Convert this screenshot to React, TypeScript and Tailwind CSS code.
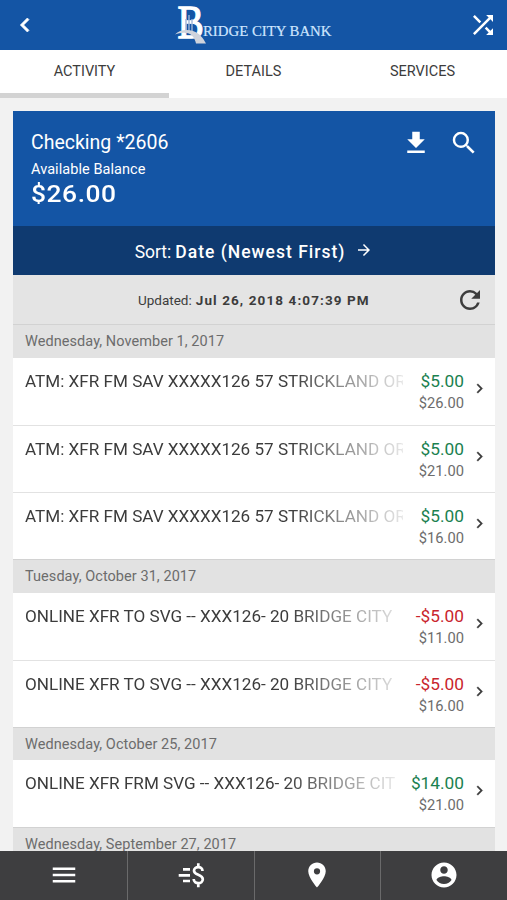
import { useState } from 'react';

type IconProps = {
  d: string;
  className: string;
};

const icons = {
  back: 'M15.41 7.41L14 6l-6 6 6 6 1.41-1.41L10.83 12z',
  next: 'M10 6L8.59 7.41 13.17 12l-4.58 4.59L10 18l6-6z',
  shuffle:
    'M10.59 9.17L5.41 4 4 5.41l5.17 5.17 1.42-1.41zM14.5 4l2.04 2.04L4 18.59 5.41 20 17.96 7.46 20 9.5V4h-5.5zm.33 9.41l-1.41 1.41 3.13 3.13L14.5 20H20v-5.5l-2.04 2.04-3.13-3.13z',
  download: 'M19 9h-4V3H9v6H5l7 7 7-7zM5 18v2h14v-2H5z',
  search:
    'M15.5 14h-.79l-.28-.27A6.471 6.471 0 0 0 16 9.5 6.5 6.5 0 1 0 9.5 16c1.61 0 3.09-.59 4.23-1.57l.27.28v.79l5 4.99L20.49 19l-4.99-5zm-6 0C7.01 14 5 11.99 5 9.5S7.01 5 9.5 5 14 7.01 14 9.5 11.99 14 9.5 14z',
  arrow: 'M12 4l-1.41 1.41L16.17 11H4v2h12.17l-5.58 5.59L12 20l8-8z',
  refresh:
    'M17.65 6.35A7.958 7.958 0 0 0 12 4c-4.42 0-7.99 3.58-7.99 8s3.57 8 7.99 8c3.73 0 6.84-2.55 7.73-6h-2.08A5.99 5.99 0 0 1 12 18c-3.31 0-6-2.69-6-6s2.69-6 6-6c1.66 0 3.14.69 4.22 1.78L13 11h7V4l-2.35 2.35z',
  menu: 'M3 18h18v-2H3v2zm0-5h18v-2H3v2zm0-7v2h18V6H3z',
  place:
    'M12 2C8.13 2 5 5.13 5 9c0 5.25 7 13 7 13s7-7.75 7-13c0-3.87-3.13-7-7-7zm0 9.5a2.5 2.5 0 0 1 0-5 2.5 2.5 0 0 1 0 5z',
  account:
    'M12 2C6.48 2 2 6.48 2 12s4.48 10 10 10 10-4.48 10-10S17.52 2 12 2zm0 3c1.66 0 3 1.34 3 3s-1.34 3-3 3-3-1.34-3-3 1.34-3 3-3zm0 14.2a7.2 7.2 0 0 1-6-3.22c.03-1.99 4-3.08 6-3.08 1.99 0 5.97 1.09 6 3.08a7.2 7.2 0 0 1-6 3.22z',
};

const groups = [
  {
    date: 'Wednesday, November 1, 2017',
    items: [
      { title: 'ATM: XFR FM SAV XXXXX126 57 STRICKLAND OR', amount: '$5.00', balance: '$26.00' },
      { title: 'ATM: XFR FM SAV XXXXX126 57 STRICKLAND OR', amount: '$5.00', balance: '$21.00' },
      { title: 'ATM: XFR FM SAV XXXXX126 57 STRICKLAND OR', amount: '$5.00', balance: '$16.00' },
    ],
  },
  {
    date: 'Tuesday, October 31, 2017',
    items: [
      { title: 'ONLINE XFR TO SVG -- XXX126- 20 BRIDGE CITY', amount: '-$5.00', balance: '$11.00' },
      { title: 'ONLINE XFR TO SVG -- XXX126- 20 BRIDGE CITY', amount: '-$5.00', balance: '$16.00' },
    ],
  },
  {
    date: 'Wednesday, October 25, 2017',
    items: [
      { title: 'ONLINE XFR FRM SVG -- XXX126- 20 BRIDGE CITY', amount: '$14.00', balance: '$21.00' },
    ],
  },
  { date: 'Wednesday, September 27, 2017', items: [] },
];

const tabs = ['ACTIVITY', 'DETAILS', 'SERVICES'];

function Icon({ d, className }: IconProps) {
  return (
    <svg viewBox="0 0 24 24" fill="currentColor" className={`shrink-0 ${className}`}>
      <path d={d} />
    </svg>
  );
}

function Logo() {
  return (
    <svg viewBox="0 0 160 50" className="h-[50px] w-[160px] shrink-0 overflow-visible" fontFamily="Liberation Serif, serif">
      <text transform="translate(3.5 38) scale(0.84 1)" fontSize="47" stroke="#fff" strokeWidth="1.3" fill="#fff">
        B
      </text>
      {/* Bridge towers and deck */}
      <path d="M12 19v14M15 15v18M18 19v14" stroke="#9fb6d8" strokeWidth="1.4" />
      <path d="M1 34.500c4-4.500 12-5.500 18-3.500 7 2.500 10 7 13 12.500H22c-1-5-4-9.500-9-10.500-4-.8-8 0-12 1.500z" fill="#cfd3dc" />
      <text x="29" y="36" fontSize="15.500" textLength="128.500" lengthAdjust="spacingAndGlyphs" fill="#cfe6ff" stroke="#cfe6ff" strokeWidth="0.2">
        RIDGE CITY BANK
      </text>
    </svg>
  );
}

export default function App() {
  const [activeTab, setActiveTab] = useState('ACTIVITY');

  return (
    <div className="flex h-[900px] w-[507px] flex-col overflow-hidden bg-[#f2f2f2] font-[Roboto,sans-serif] text-[#3c3c3c]">
      {/* Header */}
      <header className="flex h-[50px] shrink-0 items-center justify-between bg-[#1455a5] pl-[11px] pr-[9px] text-white">
        <button>
          <Icon d={icons.back} className="size-[28px] stroke-current stroke-[0.6]" />
        </button>
        <Logo />
        <button>
          <Icon d={icons.shuffle} className="size-[30px]" />
        </button>
      </header>

      {/* Tabs */}
      <nav className="grid h-12 shrink-0 grid-cols-3 bg-white">
        {tabs.map((tab) => (
          <button
            key={tab}
            onClick={() => setActiveTab(tab)}
            className={`border-b-[5px] pt-[2px] text-[14.5px] leading-none ${
              activeTab === tab ? 'border-[#d3d3d3]' : 'border-transparent'
            }`}
          >
            {tab}
          </button>
        ))}
      </nav>

      <main className="mt-[13px] mr-[12px] ml-[13px] min-h-0 flex-1 overflow-hidden bg-white">
        {/* Account summary */}
        <section className="flex h-[115px] justify-between bg-[#1455a5] pl-[18px] pr-[16px] pt-[18px] text-white">
          <div>
            <h1 className="text-[19.5px] leading-7">Checking *2606</h1>
            <p className="pt-px text-[14.5px] leading-6 tracking-[0.06px]">Available Balance</p>
            <p className="origin-left scale-x-[1.1] text-[24px] font-medium leading-6 tracking-[0.5px]">$26.00</p>
          </div>
          <div className="flex h-7 items-center gap-[18px]">
            <Icon d={icons.download} className="size-[30px]" />
            <Icon d={icons.search} className="size-[30px]" />
          </div>
        </section>

        <button className="flex h-[49px] w-full items-center justify-center bg-[#0f3a70] pt-[3px] text-[17.5px] text-white">
          <span>Sort:</span>
          <span className="ml-1 font-medium tracking-[1px]">Date (Newest First)</span>
          <Icon d={icons.arrow} className="mb-[4px] ml-[10px] size-[18px]" />
        </button>

        <div className="flex h-[49px] items-center bg-[#e4e4e4] pl-[125px] pr-[10px] pt-px text-[13.5px]">
          <span>Updated:</span>
          <span className="ml-1 font-bold tracking-[1.1px]">Jul 26, 2018 4:07:39 PM</span>
          <Icon d={icons.refresh} className="ml-auto size-[30px]" />
        </div>

        {/* Transactions */}
        {groups.map((group) => (
          <section key={group.date}>
            <h2 className="h-[33.8px] border-t border-[#d2d2d2] bg-[#e2e2e2] pl-3 text-[14.5px] leading-[33px] tracking-[0.06px] text-[#6c6c6c]">
              {group.date}
            </h2>
            {group.items.map((item, i) => (
              <div
                key={i}
                className={`flex h-[67px] bg-white pl-3 pr-[6px] pt-[11px] ${i > 0 ? 'border-t border-[#e2e2e2]' : ''}`}
              >
                <div className="flex-1 overflow-hidden whitespace-nowrap text-[17.1px] leading-6 [mask-image:linear-gradient(to_right,#000_70%,rgba(0,0,0,0.12))]">
                  {item.title}
                </div>
                <div className="ml-[16px] shrink-0 text-right">
                  <p className={`text-[17.3px] leading-6 ${item.amount.startsWith('-') ? 'text-[#c9252d]' : 'text-[#1b8150]'}`}>
                    {item.amount}
                  </p>
                  <p className="text-[14.7px] leading-5 text-[#6c6c6c]">{item.balance}</p>
                </div>
                <Icon d={icons.next} className="ml-[6px] mt-[10px] size-[19px] stroke-current stroke-[0.4]" />
              </div>
            ))}
          </section>
        ))}
      </main>

      {/* Bottom navigation */}
      <footer className="grid h-[49px] shrink-0 grid-cols-4 bg-[#3e3e40] text-white">
        <button className="flex items-center justify-center pb-px pl-px">
          <Icon d={icons.menu} className="size-[30px]" />
        </button>
        <button className="flex items-center justify-center border-l border-[#6a6a6b] pb-px">
          <svg viewBox="0 0 28 28" className="size-[28px]" fill="none" stroke="currentColor" strokeWidth="2.7">
            <path d="M6 8.300h7M1.700 14.300h11.300M6 20h7" />
            <path d="M25.500 10c0-2.500-2-3.800-4.200-3.800S17 7.500 17 9.800c0 4.700 8.800 3.400 8.800 8.400 0 2.500-2.200 3.900-4.500 3.900s-4.600-1.300-4.600-4.100M21.300 2.200v4M21.300 22v4.300" />
          </svg>
        </button>
        <button className="flex items-center justify-center border-l border-[#6a6a6b] pb-px">
          <Icon d={icons.place} className="size-[30px]" />
        </button>
        <button className="flex items-center justify-center border-l border-[#6a6a6b] pb-px">
          <Icon d={icons.account} className="size-[30px]" />
        </button>
      </footer>
    </div>
  );
}
